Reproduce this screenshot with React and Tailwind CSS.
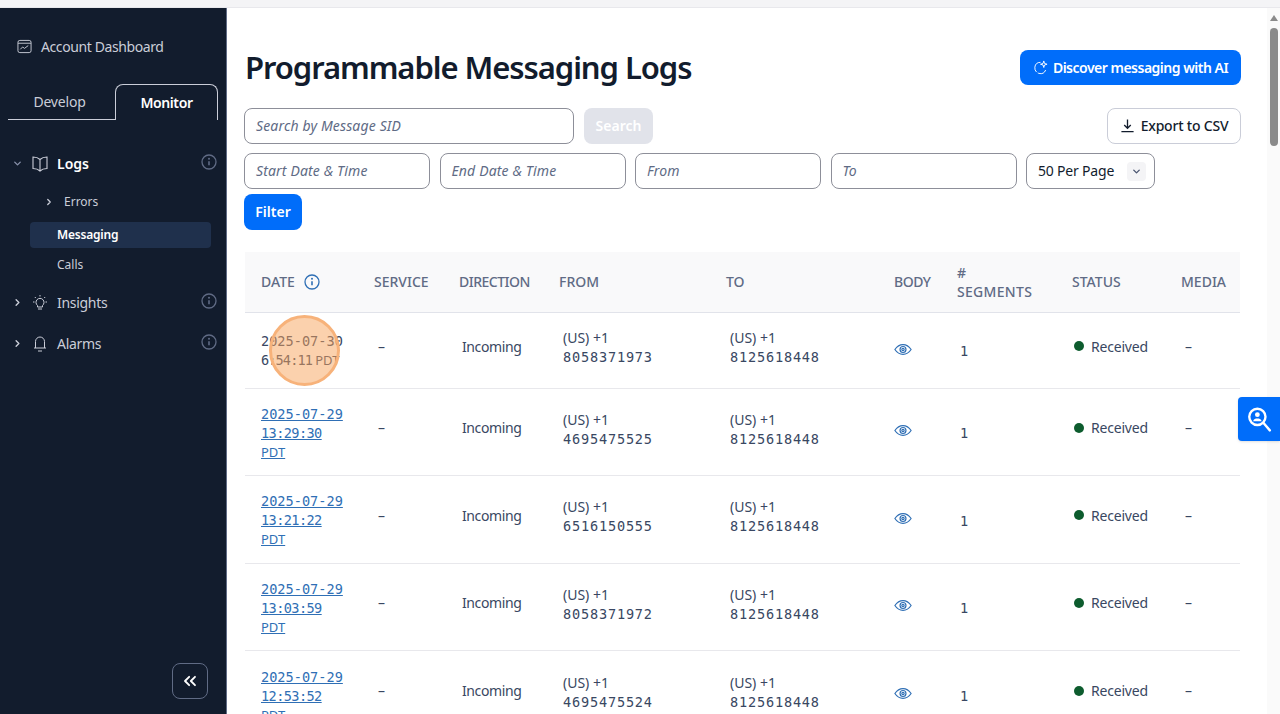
import { ChevronDown, ChevronRight, ChevronsLeft } from 'lucide-react';

const rows = [
  { date: '2025-07-30', time: '6:54:11', from: '8058371973', plain: true, h: 'h-[76px]' },
  { date: '2025-07-29', time: '13:29:30', from: '4695475525', h: 'h-[87.6px]' },
  { date: '2025-07-29', time: '13:21:22', from: '6516150555', h: 'h-[87.6px]' },
  { date: '2025-07-29', time: '13:03:59', from: '8058371972', h: 'h-[87.6px]' },
  { date: '2025-07-29', time: '12:53:52', from: '4695475524', h: 'h-[87.6px]' },
];

function InfoIcon({ className }) {
  return (
    <svg viewBox="0 0 16 16" fill="none" stroke="currentColor" strokeWidth="1.3" className={className}>
      <circle cx="8" cy="8" r="7" />
      <path d="M8 7.200v4" strokeWidth="1.600" />
      <circle cx="8" cy="4.800" r="1" fill="currentColor" stroke="none" />
    </svg>
  );
}

function EyeIcon() {
  return (
    <svg viewBox="0 0 20 14" fill="none" stroke="#2f6fb5" strokeWidth="1.300" className="w-[18px] h-[13px]">
      <path d="M1 7c2.400-3.600 5.400-5.400 9-5.400S16.600 3.400 19 7c-2.400 3.600-5.400 5.400-9 5.400S3.400 10.600 1 7Z" />
      <circle cx="10" cy="7" r="3.300" />
      <circle cx="10" cy="7" r="1.300" />
    </svg>
  );
}

function NavRow({ label, icon, open }) {
  return (
    <div className="flex items-center h-[41px] pl-[12px] pr-[9px] text-[14px] text-[#cacdd8]">
      {open ? <ChevronDown size={11} strokeWidth={3} className="text-[#8891aa] w-[11px]" /> : <ChevronRight size={11} strokeWidth={3} className="text-[#cacdd8] w-[11px]" />}
      <span className="w-[18px] h-[18px] ml-[8px] mr-[8px] text-[#cacdd8]">{icon}</span>
      <span className={open ? 'font-semibold text-white' : 'tracking-[-0.3px]'}>{label}</span>
      <InfoIcon className="w-[16px] h-[16px] ml-auto text-[#606b85] -mt-[3px]" />
    </div>
  );
}

function Field({ placeholder, className }) {
  return (
    <div className={`h-[36px] border border-[#8d8f99] rounded-lg bg-white pl-[11px] pb-[2px] flex items-center italic text-[14px] tracking-[0.15px] text-[#606b85] ${className}`}>
      {placeholder}
    </div>
  );
}

export default function App() {
  return (
    <div className="relative h-screen overflow-hidden bg-white text-[#121c2d] font-['Noto_Sans',sans-serif]">
      <div className="h-[8px] bg-[#f4f4f6] border-b border-[#e8e8ec]" />
      <div className="flex h-[706px]">
        <aside className="w-[227px] shrink-0 bg-[#121c2d] border-r border-[#606b85] flex flex-col">
          <div className="flex items-center h-[24px] mt-[26px] pl-[17px] text-[14px] tracking-[-0.4px] text-[#cacdd8]">
            <svg viewBox="0 0 16 16" fill="none" stroke="currentColor" strokeWidth="1" className="w-[15px] h-[15px] mr-[9px]">
              <rect x="1" y="1.500" width="14" height="13" rx="2" />
              <path d="M1 4.500h14M3.500 11l2.500-2.500 2 1.500 4-3" />
            </svg>
            Account Dashboard
          </div>

          <div className="flex h-[36px] mt-[26px] ml-[8px] mr-[8px] text-[14px]">
            <div className="w-[107px] flex items-center justify-center border-b border-[#cacdd8] text-[#cacdd8] tracking-[-0.2px] pr-[4px]">Develop</div>
            <div className="w-[103px] flex items-center justify-center border border-b-0 border-[#cacdd8] rounded-t-lg font-semibold tracking-[-0.4px] text-white">Monitor</div>
          </div>

          <div className="mt-[23px]">
            <NavRow
              open
              label="Logs"
              icon={
                <svg viewBox="0 0 18 18" fill="none" stroke="currentColor" strokeWidth="1.100">
                  <path d="M9 4.500C7.500 3 5 2 2 2v11.500c3 0 5.500 1 7 2.500 1.500-1.500 4-2.500 7-2.500V2c-3 0-5.500 1-7 2.500ZM9 4.500V16" />
                </svg>
              }
            />
            <div className="flex items-center h-[24px] mt-[6px] pl-[44px] text-[12px] text-[#cacdd8]">
              <ChevronRight size={10} strokeWidth={3} className="mr-[10px]" />
              Errors
            </div>
            <div className="flex items-center h-[26px] mt-[8px] ml-[30px] mr-[15px] pl-[27px] rounded bg-[#1f304c] text-[12px] font-semibold tracking-[-0.2px] text-white">
              Messaging
            </div>
            <div className="flex items-center h-[24px] mt-[5px] pl-[57px] text-[12px] text-[#cacdd8]">Calls</div>
            <div className="mt-[5px]">
              <NavRow
                label="Insights"
                icon={
                  <svg viewBox="0 0 18 18" fill="none" stroke="currentColor" strokeWidth="1">
                    <path d="M6.500 11.500a4 4 0 1 1 5 0v1.500h-5v-1.500ZM7 15h4M9 1v1.500M2 8h1.500M14.500 8H16M3.800 3l1 1M14.200 3l-1 1" />
                  </svg>
                }
              />
              <NavRow
                label="Alarms"
                icon={
                  <svg viewBox="0 0 18 18" fill="none" stroke="currentColor" strokeWidth="1">
                    <path d="M4.500 13V6.500a4.500 4.500 0 0 1 9 0V13M3 13h12M7 16h4" />
                  </svg>
                }
              />
            </div>
          </div>

          <div className="mt-auto mb-[15px] mr-[18px] ml-auto w-[36px] h-[36px] rounded-lg border border-[#606b85] flex items-center justify-center text-white">
            <ChevronsLeft size={20} strokeWidth={2.200} />
          </div>
        </aside>

        <main className="flex-1 min-w-0 pl-[17px] pr-[39px]">
          <div className="flex items-center justify-between h-[36px] mt-[41px]">
            <h1 className="text-[31px] font-semibold leading-none tracking-[-1.07px] ml-[1px]">Programmable Messaging Logs</h1>
            <button className="h-[35px] w-[221px] rounded-lg bg-[#006dfa] text-white text-[14px] font-semibold tracking-[-0.5px] flex items-center justify-center">
              <svg viewBox="0 0 16 16" fill="none" stroke="currentColor" strokeWidth="1" className="w-[15px] h-[15px] mr-[5px]">
                <path d="M8 2.500a6 6 0 1 0 5.500 8.200" strokeDasharray="14 1.500" />
                <path d="M11.500 1l.8 2.700 2.700.8-2.700.8-.8 2.700-.8-2.700-2.700-.8 2.700-.8.8-2.700Z" />
              </svg>
              Discover messaging with AI
            </button>
          </div>

          <div className="flex items-center mt-[23px]">
            <Field placeholder="Search by Message SID" className="w-[330px]" />
            <button className="ml-[10px] w-[69px] h-[36px] rounded-lg bg-[#e1e3ea] text-white text-[14px] font-semibold pb-[2px]">Search</button>
            <button className="ml-auto w-[134px] h-[36px] rounded-lg border border-[#cacdd8] text-[14px] font-medium tracking-[-0.2px] pb-[1px] flex items-center justify-center gap-[6px]">
              <svg viewBox="0 0 16 16" fill="none" stroke="currentColor" strokeWidth="1.400" className="w-[15px] h-[15px]">
                <path d="M8 1.500v9.500M4.500 7.500 8 11l3.500-3.500M1.500 14.500h13" />
              </svg>
              Export to CSV
            </button>
          </div>

          <div className="flex items-center gap-[9.500px] mt-[9px]">
            <Field placeholder="Start Date & Time" className="w-[186px]" />
            <Field placeholder="End Date & Time" className="w-[186px]" />
            <Field placeholder="From" className="w-[186px]" />
            <Field placeholder="To" className="w-[186px]" />
            <div className="w-[129px] h-[36px] border border-[#8d8f99] rounded-lg flex items-center pl-[11px] pr-[8px] text-[14px] tracking-[-0.2px]">
              <span className="pb-[2px]">50 Per Page</span>
              <span className="ml-auto w-[19px] h-[19px] rounded bg-[#f4f4f6] flex items-center justify-center">
                <ChevronDown size={11} strokeWidth={3} className="text-[#4b5671]" />
              </span>
            </div>
          </div>

          <button className="block mt-[5px] w-[58px] h-[36px] rounded-lg bg-[#006dfa] text-white text-[14px] font-semibold pb-[1px]">Filter</button>

          <table className="mt-[22px] ml-[1px] w-[995px] table-fixed border-collapse text-left">
            <thead>
              <tr className="h-[60px] bg-[#f9f9fa] border-b border-[#e1e3ea] text-[#606b85] text-[14px]">
                <th className="w-[113px] pl-[16px] font-medium">
                  <span className="flex items-center gap-[9px]">DATE <InfoIcon className="w-[16px] h-[16px] text-[#2f6fb5]" /></span>
                </th>
                <th className="w-[85px] pl-[16px] font-medium">SERVICE</th>
                <th className="w-[100px] pl-[16px] font-medium tracking-[-0.5px]">DIRECTION</th>
                <th className="w-[167px] pl-[16px] font-medium">FROM</th>
                <th className="w-[168px] pl-[16px] font-medium">TO</th>
                <th className="w-[63px] pl-[16px] font-medium tracking-[-0.5px]">BODY</th>
                <th className="w-[115px] pl-[16px] font-medium leading-[19px] tracking-[0.3px]">#<br />SEGMENTS</th>
                <th className="w-[109px] pl-[16px] font-medium">STATUS</th>
                <th className="w-[75px] pl-[16px] font-medium">MEDIA</th>
              </tr>
            </thead>
            <tbody className="text-[14px] text-[#394762]">
              {rows.map((row) => (
                <tr key={row.from} className={`${row.h} border-b border-[#e8e8ec]`}>
                  <td className="pl-[16px] font-['DejaVu_Sans_Mono',monospace] text-[13.600px] leading-[19px] align-middle">
                    {row.plain ? (
                      <span className="block mt-[1px]">
                        {row.date}<br /><span className="tracking-[-0.9px]">{row.time}</span> <span className="font-['Noto_Sans',sans-serif] text-[13px] -ml-[5px]">PDT</span>
                      </span>
                    ) : (
                      <a className="block mt-[3px] text-[#2f6fb5] underline">
                        {row.date}<br /><span className="tracking-[-0.6px]">{row.time}</span><br /><span className="font-['Noto_Sans',sans-serif] text-[13px]">PDT</span>
                      </a>
                    )}
                  </td>
                  <td className="pl-[20px]"><span className="block -mt-[8px]">–</span></td>
                  <td className="pl-[19px] tracking-[-0.4px]"><span className="block -mt-[8px]">Incoming</span></td>
                  <td className="pl-[20px] leading-[19px]">
                    <span className="block -mt-[5px]">(US) +1<br /><span className="font-['DejaVu_Sans_Mono',monospace] text-[13.600px] tracking-[0.8px]">{row.from}</span></span>
                  </td>
                  <td className="pl-[20px] leading-[19px]">
                    <span className="block -mt-[5px]">(US) +1<br /><span className="font-['DejaVu_Sans_Mono',monospace] text-[13.600px] tracking-[0.8px]">8125618448</span></span>
                  </td>
                  <td className="pl-[16px]"><span className="block -mt-[2px]"><EyeIcon /></span></td>
                  <td className="pl-[19px] font-['DejaVu_Sans_Mono',monospace] text-[13.600px]"><span className="block mt-[3px]">1</span></td>
                  <td className="pl-[18px]">
                    <span className="flex items-center gap-[7px] -mt-[8px] tracking-[-0.2px]">
                      <span className="w-[10px] h-[10px] rounded-full bg-[#0d5c2e]" />
                      Received
                    </span>
                  </td>
                  <td className="pl-[20px]"><span className="block -mt-[8px]">–</span></td>
                </tr>
              ))}
            </tbody>
          </table>
        </main>
      </div>

      {/* click marker drawn over the first row */}
      <div className="absolute left-[269px] top-[315px] w-[71px] h-[71px] rounded-full bg-[#f7a35c]/50 border-[3px] border-[#f7b27a]" />

      {/* page scrollbar */}
      <div className="absolute right-0 top-[8px] bottom-0 w-[13px] bg-[#fafafa]">
        <div className="mx-auto mt-[7px] w-0 h-0 border-x-[4px] border-x-transparent border-b-[6px] border-b-[#8a8a8a]" />
        <div className="mx-auto mt-[7px] w-[8px] h-[118px] rounded bg-[#8a8a8a]" />
      </div>

      {/* floating helper button */}
      <div className="absolute right-0 top-[397px] w-[42px] h-[44px] rounded-l bg-[#006dfa] flex items-center justify-center shadow">
        <svg viewBox="0 0 24 24" fill="none" stroke="white" strokeWidth="2.200" className="w-[26px] h-[26px]">
          <circle cx="10.500" cy="10" r="7.500" />
          <circle cx="10.500" cy="8" r="2.200" fill="white" stroke="none" />
          <path d="M6.500 14c.8-2 2.200-2.500 4-2.500s3.200.5 4 2.500" fill="white" stroke="none" />
          <path d="M16 15.500l6 7" strokeLinecap="round" />
        </svg>
      </div>
    </div>
  );
}
